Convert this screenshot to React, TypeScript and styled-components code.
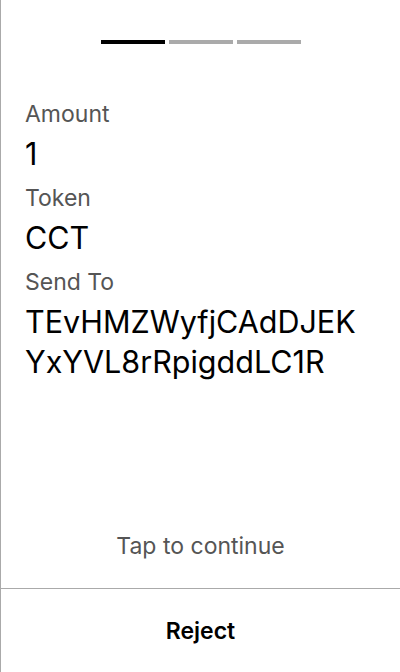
import React from 'react';
import styled, { createGlobalStyle } from 'styled-components';

const GlobalStyle = createGlobalStyle`
  html, body {
    margin: 0;
    padding: 0;
    background: #fff;
  }
  body {
    font-family: Inter, "Noto Sans", sans-serif;
  }
`;

// ! styled components
const Screen = styled.div`
  box-sizing: border-box;
  width: 400px;
  height: 672px;
  display: flex;
  flex-direction: column;
  border-left: 1px solid #aaaaaa;
  background: #fff;
`;

const Steps = styled.div`
  display: flex;
  justify-content: center;
  gap: 4px;
  padding-top: 40px;
`;

const Step = styled.div<{ $active?: boolean }>`
  width: 64px;
  height: 4px;
  background: ${({ $active }) => ($active ? '#000' : '#aaaaaa')};
`;

const Details = styled.div`
  display: flex;
  flex-direction: column;
  padding: 56px 35px 0 24px;
  flex: 1;
`;

const Label = styled.div`
  font-size: 23px;
  line-height: 28px;
  color: #555555;
  margin-bottom: 6px;
`;

const Value = styled.div`
  font-size: 30.5px;
  line-height: 40px;
  color: #000;
  margin-bottom: 10px;
  word-break: break-all;
`;

const Hint = styled.div`
  text-align: center;
  font-size: 23px;
  line-height: 28px;
  color: #555555;
  padding-bottom: 28px;
`;

const RejectBtn = styled.button`
  box-sizing: border-box;
  height: 84px;
  padding: 0;
  border: none;
  border-top: 1px solid #aaaaaa;
  background: transparent;
  font-family: Inter, "Noto Sans", sans-serif;
  font-size: 23px;
  font-weight: 600;
  color: #000;
  cursor: pointer;
`;

const details = [
  { label: 'Amount', value: '1' },
  { label: 'Token', value: 'CCT' },
  { label: 'Send To', value: 'TEvHMZWyfjCAdDJEKYxYVL8rRpigddLC1R' },
];

const App = () => {
  return (
    <Screen>
      <GlobalStyle />
      {/* progress */}
      <Steps>
        <Step $active />
        <Step />
        <Step />
      </Steps>

      {/* transfer details */}
      <Details>
        {details.map((d) => (
          <React.Fragment key={d.label}>
            <Label>{d.label}</Label>
            <Value>{d.value}</Value>
          </React.Fragment>
        ))}
      </Details>

      <Hint>Tap to continue</Hint>
      <RejectBtn>Reject</RejectBtn>
    </Screen>
  );
};

export default App;
